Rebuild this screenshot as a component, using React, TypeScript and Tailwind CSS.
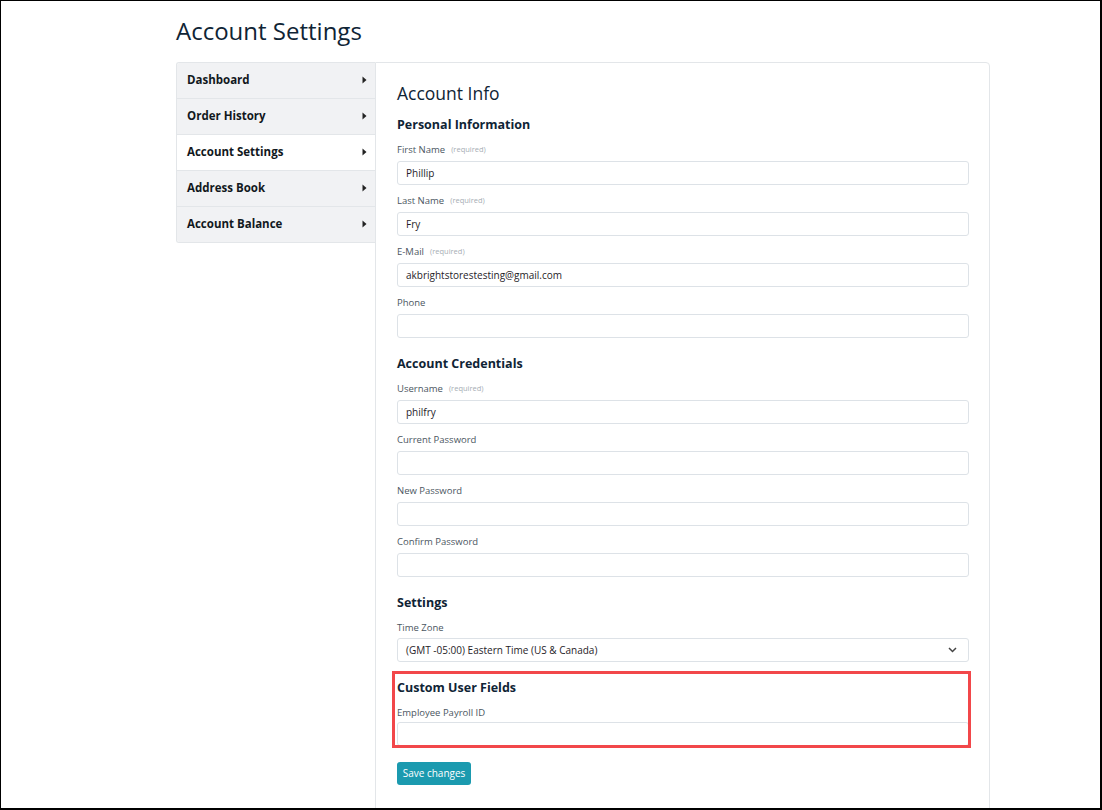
import React from "react";

const font = { fontFamily: '"Open Sans", "Noto Sans", Arial, sans-serif' };

const navItems = [
  { label: "Dashboard", active: false },
  { label: "Order History", active: false },
  { label: "Account Settings", active: true },
  { label: "Address Book", active: false },
  { label: "Account Balance", active: false },
];

function Caret() {
  return (
    <svg width="5" height="8" viewBox="0 0 5 8" className="shrink-0">
      <path d="M0.5 0.5 L4.5 4 L0.5 7.5 Z" fill="#222" />
    </svg>
  );
}

function Field({ label, required, value }: { label: string; required?: boolean; value?: string }) {
  return (
    <div className="mb-[9px]">
      <div className="mb-[4px] flex h-[14px] items-center gap-[6px]">
        <span className="text-[9.5px] text-[#4b5661]">{label}</span>
        {required && <span className="text-[7.5px] text-[#a6adb4]">(required)</span>}
      </div>
      <div className="flex h-[24px] items-center rounded-[3px] border border-[#dde2e7] bg-white px-[8px] text-[10px] text-[#1f2328]">
        {value}
      </div>
    </div>
  );
}

function SectionTitle({ children }: { children: React.ReactNode }) {
  return (
    <div className="mb-[9px] flex h-[18px] items-center text-[12.5px] font-bold text-[#0f2435]">
      {children}
    </div>
  );
}

export default function App() {
  return (
    <div
      style={font}
      className="box-border h-[810px] w-[1102px] overflow-hidden border-t border-l border-r-2 border-b-2 border-black bg-white"
    >
      <div className="pl-[175px]">
        <h1 className="flex h-[61px] items-center pb-[2px] text-[24px] font-medium text-[#0f2435]">
          Account Settings
        </h1>
        <div className="flex">
          {/* side navigation */}
          <div className="w-[199px] self-start overflow-hidden rounded-l-[3px] border border-r-0 border-[#e3e6e9]">
            {navItems.map((item, i) => (
              <div
                key={item.label}
                className={`flex items-center justify-between pb-[1px] pl-[10px] pr-[8px] text-[11.5px] font-bold text-[#111820] ${
                  item.active ? "bg-white" : "bg-[#f1f2f4]"
                } ${i > 0 ? "h-[36px] border-t border-[#e3e6e9]" : "h-[35px]"}`}
              >
                <span>{item.label}</span>
                <Caret />
              </div>
            ))}
          </div>

          {/* account form */}
          <div className="h-[760px] w-[615px] rounded-r-[4px] border border-[#e3e6e9] pl-[21px] pr-[20px] pt-[18px]">
            <h2 className="mb-[11px] flex h-[24px] items-center text-[17.5px] font-normal text-[#0f2435]">
              Account Info
            </h2>

            <SectionTitle>Personal Information</SectionTitle>
            <Field label="First Name" required value="Phillip" />
            <Field label="Last Name" required value="Fry" />
            <Field label="E-Mail" required value="akbrightstorestesting@gmail.com" />
            <Field label="Phone" />

            <div className="h-[8px]" />
            <SectionTitle>Account Credentials</SectionTitle>
            <Field label="Username" required value="philfry" />
            <Field label="Current Password" />
            <Field label="New Password" />
            <Field label="Confirm Password" />

            <div className="h-[8px]" />
            <SectionTitle>Settings</SectionTitle>
            <div className="mb-[9px]">
              <div className="mb-[3px] flex h-[14px] items-center text-[9.5px] text-[#4b5661]">Time Zone</div>
              <div className="flex h-[24px] items-center justify-between rounded-[3px] border border-[#dde2e7] bg-white pl-[8px] pr-[11px] text-[10px] text-[#1f2328]">
                <span>(GMT -05:00) Eastern Time (US &amp; Canada)</span>
                <svg width="9" height="6" viewBox="0 0 9 6">
                  <path d="M1 1 L4.5 4.5 L8 1" fill="none" stroke="#444" strokeWidth="1.5" />
                </svg>
              </div>
            </div>

            <div className="h-[8px]" />
            <div className="relative pb-[1px]">
              <SectionTitle>Custom User Fields</SectionTitle>
              <div className="mb-[2px] flex h-[14px] items-center text-[9.5px] text-[#4b5661]">Employee Payroll ID</div>
              <div className="h-[24px] rounded-[3px] border border-[#dde2e7] bg-white" />
              <div className="pointer-events-none absolute -left-[5px] -right-[2px] -top-[8px] -bottom-[1px] border-[3px] border-[#f2474a]" />
            </div>

            <div className="h-[15px]" />
            <div className="flex h-[23px] w-[74px] items-center justify-center rounded-[3px] bg-[#1b9aaf] text-[10px] text-white">
              Save changes
            </div>
          </div>
        </div>
      </div>
    </div>
  );
}
